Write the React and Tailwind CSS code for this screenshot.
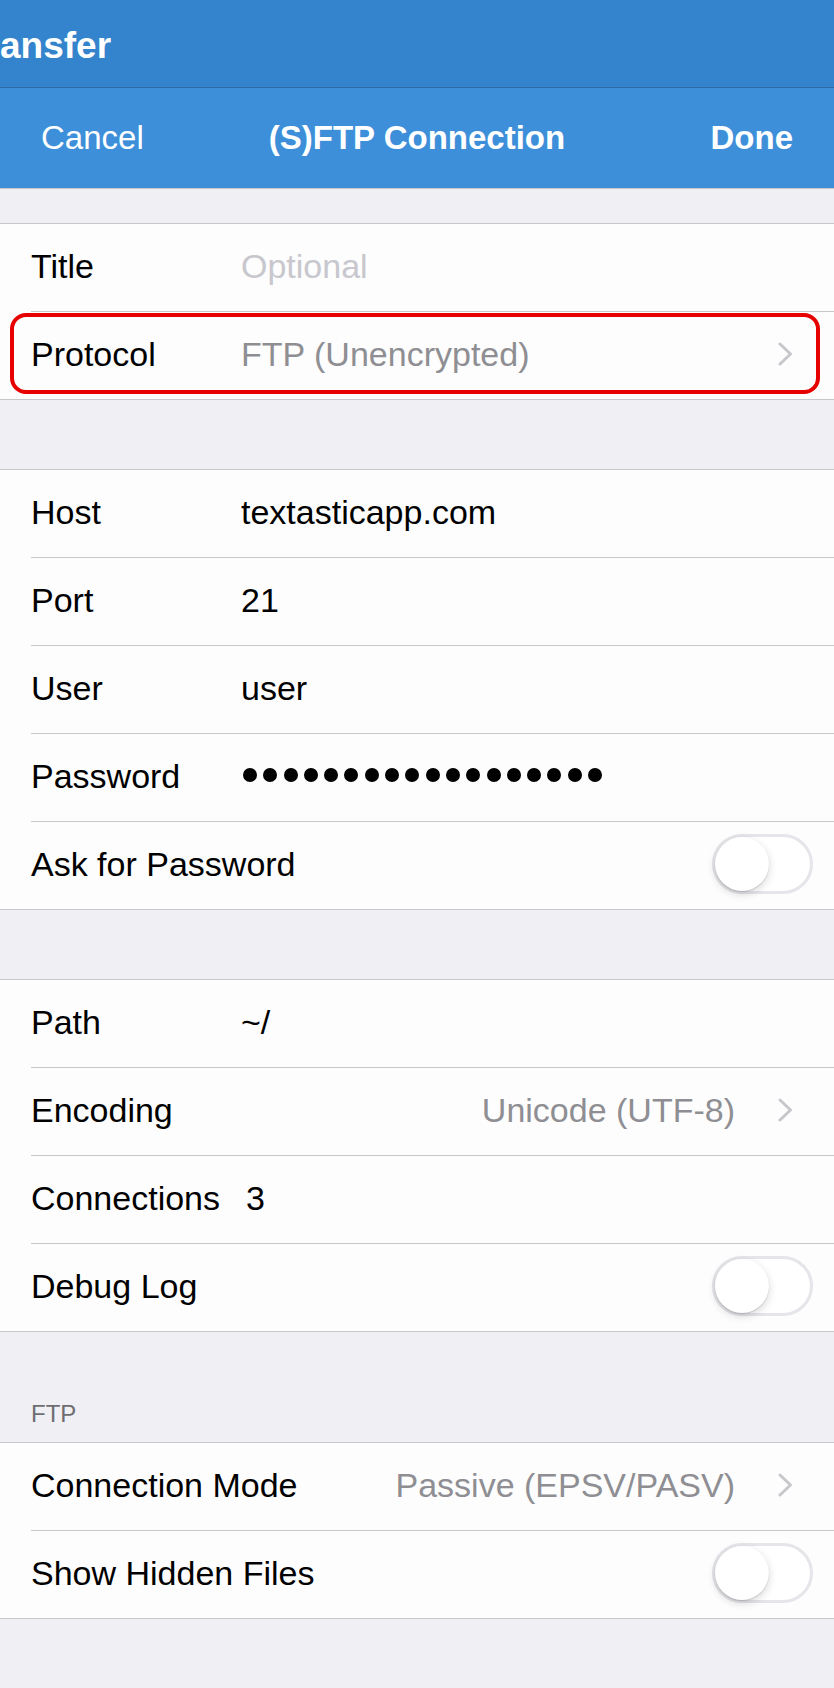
import React from 'react';

const Chevron = () => (
  <svg width="15" height="24" viewBox="0 0 15 24" className="shrink-0">
    <path d="M2 2 L12.5 12 L2 22" fill="none" stroke="#c7c7cc" strokeWidth="3" strokeLinecap="round" strokeLinejoin="round" />
  </svg>
);

const Switch = () => (
  <div className="w-[101px] h-[60px] rounded-full border-[3px] border-[#e5e5ea] bg-white flex items-center shrink-0">
    <div className="w-[54px] h-[54px] rounded-full bg-white shadow-[0_3px_8px_rgba(0,0,0,0.16),0_1px_1px_rgba(0,0,0,0.14)]" />
  </div>
);

const Row = ({ label, last, right = 41, children, overlay }) => (
  <div className={`relative ${last ? 'h-[87px]' : 'h-[88px]'} pl-[31px] bg-[#fdfdfd] flex`}>
    <div
      className={`flex-1 flex items-center pb-[4px] ${last ? '' : 'border-b border-[#c8c7cc]'}`}
      style={{ paddingRight: right }}
    >
      <div className="min-w-[196px] mr-[14px] shrink-0 text-black">{label}</div>
      {children}
    </div>
    {overlay}
  </div>
);

const Group = ({ children }) => (
  <div className="bg-[#fdfdfd] border-y border-[#c8c7cc]">{children}</div>
);

export default function App() {
  return (
    <div className="w-[834px] min-h-[1688px] bg-[#efeff4] font-['Liberation_Sans',Arial,sans-serif] text-[34px] leading-none overflow-hidden">
      {/* Parent header behind the sheet */}
      <div className="h-[88px] bg-[#3384cc] border-b border-[#2c6da8] pt-[27px]">
        <div className="text-[37px] font-bold text-white whitespace-nowrap">ansfer</div>
      </div>

      {/* Nav bar */}
      <div className="h-[101px] bg-[#3d8fd9] border-b border-[#c4c4c9] flex items-center px-[41px] pb-[2px] text-[33px] text-white">
        <div className="flex-1">Cancel</div>
        <div className="font-bold whitespace-nowrap">(S)FTP Connection</div>
        <div className="flex-1 text-right font-bold">Done</div>
      </div>

      <div className="h-[34px]" />
      <Group>
        <Row label="Title">
          <span className="text-[#c7c7cd]">Optional</span>
        </Row>
        <Row
          label="Protocol"
          last
          overlay={
            <div className="absolute top-[1px] left-[10px] right-[14px] h-[81px] border-[4px] border-[#e60000] rounded-[16px] pointer-events-none" />
          }
        >
          <span className="flex-1 text-[#8e8e93]">FTP (Unencrypted)</span>
          <Chevron />
        </Row>
      </Group>

      <div className="h-[69px]" />
      <Group>
        <Row label="Host">textasticapp.com</Row>
        <Row label="Port">21</Row>
        <Row label="User">user</Row>
        <Row label="Password">
          <div className="flex gap-[6.3px] ml-[2px] mt-[-2px]">
            {Array.from({ length: 18 }).map((_, i) => (
              <div key={i} className="w-[14px] h-[14px] rounded-full bg-black" />
            ))}
          </div>
        </Row>
        <Row label="Ask for Password" last right={21}>
          <div className="flex-1" />
          <Switch />
        </Row>
      </Group>

      <div className="h-[69px]" />
      <Group>
        <Row label="Path">~/</Row>
        <Row label="Encoding">
          <span className="flex-1 text-right text-[#8e8e93] mr-[43px]">Unicode (UTF-8)</span>
          <Chevron />
        </Row>
        <Row label="Connections">
          <span className="ml-[5px]">3</span>
        </Row>
        <Row label="Debug Log" last right={21}>
          <div className="flex-1" />
          <Switch />
        </Row>
      </Group>

      <div className="h-[110px] flex items-end pl-[31px] pb-[16px]">
        <span className="text-[24px] text-[#6d6d72]">FTP</span>
      </div>
      <Group>
        <Row label="Connection Mode">
          <span className="flex-1 text-right text-[#8e8e93] mr-[43px]">Passive (EPSV/PASV)</span>
          <Chevron />
        </Row>
        <Row label="Show Hidden Files" last right={21}>
          <div className="flex-1" />
          <Switch />
        </Row>
      </Group>
    </div>
  );
}
